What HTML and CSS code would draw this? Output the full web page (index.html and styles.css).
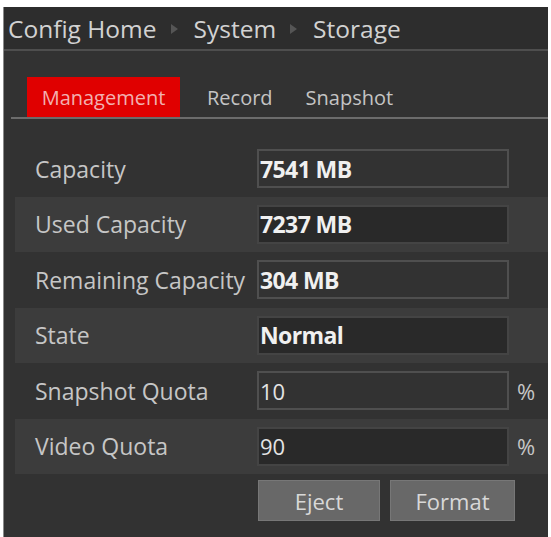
FILE: index.html
```html
<!DOCTYPE html>
<html lang="en">

<head>
    <meta charset="UTF-8">
    <meta name="viewport" content="width=device-width, initial-scale=1.0">
    <title>Storage</title>
    <link rel="stylesheet" href="styles.css">
</head>

<body>
    <div id="panel">
        <div id="crumbs">
            <span>Config Home</span>
            <span class="sep"></span>
            <span>System</span>
            <span class="sep"></span>
            <span>Storage</span>
        </div>
        <div id="tabs">
            <div class="tab active">Management</div>
            <div class="tab">Record</div>
            <div class="tab">Snapshot</div>
        </div>
        <div id="form">
            <div class="row">
                <div class="label">Capacity</div>
                <div class="field bold">7541 MB</div>
            </div>
            <div class="row alt">
                <div class="label">Used Capacity</div>
                <div class="field bold">7237 MB</div>
            </div>
            <div class="row">
                <div class="label">Remaining Capacity</div>
                <div class="field bold">304 MB</div>
            </div>
            <div class="row alt">
                <div class="label">State</div>
                <div class="field bold">Normal</div>
            </div>
            <div class="row">
                <div class="label">Snapshot Quota</div>
                <div class="field">10</div>
                <div class="unit">%</div>
            </div>
            <div class="row alt">
                <div class="label">Video Quota</div>
                <div class="field">90</div>
                <div class="unit">%</div>
            </div>
        </div>
        <div id="buttons">
            <div class="btn eject">Eject</div>
            <div class="btn format">Format</div>
        </div>
    </div>
</body>

</html>
```

FILE: styles.css
```css
body {
    margin: 0;
    padding: 0;
    background: #fff;
    font-family: "Open Sans", "Noto Sans", sans-serif;
    overflow: hidden;
}

#panel {
    margin: 7px 3px 0 3px;
    height: 530px;
    background: #323232;
    border-left: 1px solid #8a8a8a;
    color: #c8c8c8;
}

#crumbs {
    height: 42px;
    background: #2d2d2d;
    border-bottom: 2px solid #4e4e4e;
    display: flex;
    align-items: center;
    padding-left: 4px;
    font-size: 24.5px;
    color: #d2d2d2;
}

.sep {
    width: 0;
    height: 0;
    margin: 2px 16px 0 14px;
    border-top: 5px solid transparent;
    border-bottom: 5px solid transparent;
    border-left: 7px solid #555;
}

#tabs {
    display: flex;
    margin: 26px 0 0 7px;
    padding-left: 16px;
    border-bottom: 2px solid #6c6c6c;
    height: 40px;
    align-items: stretch;
}

.tab {
    display: flex;
    align-items: center;
    font-size: 20px;
    color: #c4c4c4;
    padding: 0 17px 0 16px;
}

.tab.active {
    background: #e00000;
    color: #f2b0b0;
    width: 153px;
    box-sizing: border-box;
    justify-content: center;
    padding: 0;
    margin-right: 11px;
}

#form {
    margin: 22px 0 0 11px;
}

.row {
    display: flex;
    align-items: center;
    height: 55.5px;
}

.row.alt {
    background: #3c3c3c;
}

.label {
    width: 222px;
    padding-left: 20px;
    font-size: 23px;
    color: #c6c6c6;
    white-space: nowrap;
}

.field {
    width: 252px;
    height: 39px;
    box-sizing: border-box;
    border: 2px solid #4f4f4f;
    display: flex;
    align-items: center;
    padding-left: 1px;
    font-size: 22px;
    color: #e4e4e4;
}

.row.alt .field {
    background: #292929;
    border-color: #444;
}

.field.bold {
    font-weight: 700;
    font-size: 23px;
    color: #f0f0f0;
    letter-spacing: -0.6px;
}

.unit {
    margin-left: 8px;
    font-size: 22px;
    color: #c6c6c6;
}

#buttons {
    display: flex;
    gap: 10px;
    margin: 6px 0 0 254px;
}

.btn {
    height: 41px;
    display: flex;
    align-items: center;
    justify-content: center;
    background: #686868;
    border: 1px solid #777;
    box-sizing: border-box;
    font-size: 22px;
    color: #d8d8d8;
}

.eject {
    width: 122px;
}

.format {
    width: 125px;
}
```
